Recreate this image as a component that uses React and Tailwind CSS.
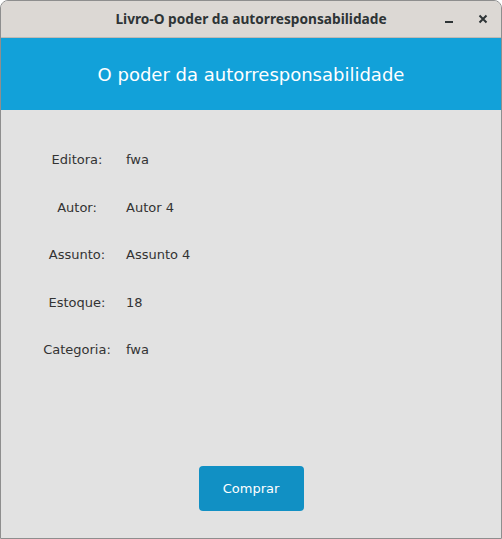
import React from 'react';

const FIELDS = [
    ['Editora:', 'fwa'],
    ['Autor:', 'Autor 4'],
    ['Assunto:', 'Assunto 4'],
    ['Estoque:', '18'],
    ['Categoria:', 'fwa'],
];

const App = () => {
    return (
        <div className="w-[502px] h-[539px] flex flex-col bg-[#e2e2e2] border border-[#8e8e8e] rounded-t-[8px] overflow-hidden font-['DejaVu_Sans',sans-serif]">
            {/* title bar */}
            <div className="h-[37px] shrink-0 flex items-center relative bg-[#dcd8d4] border-b border-[#bfbab5]">
                <div className="flex-1 text-center text-[13.7px] font-bold text-[#2e3436] font-['Noto_Sans',sans-serif]">Livro-O poder da autorresponsabilidade</div>
                <div className="absolute right-[13px] top-0 h-full flex items-center gap-[24px]">
                    <svg width="10" height="10" viewBox="0 0 10 10"><rect x="1" y="7" width="8" height="2" fill="#2e3436" /></svg>
                    <svg width="10" height="10" viewBox="0 0 10 10"><path d="M1.5 1.5 L8.5 8.5 M8.5 1.5 L1.5 8.5" stroke="#2e3436" strokeWidth="2" /></svg>
                </div>
            </div>

            {/* header */}
            <div className="h-[72px] shrink-0 bg-[#12a1d9] flex items-center justify-center text-white text-[18px] pt-[1px]">
                O poder da autorresponsabilidade
            </div>

            {/* fields */}
            <div className="flex-1 flex flex-col pt-[26px] text-[13px] text-[#333]">
                {FIELDS.map(([label, value]) => (
                    <div key={label} className="h-[47.5px] flex items-center">
                        <div className="w-[90px] ml-[31px] text-center">{label}</div>
                        <div className="ml-[4px]">{value}</div>
                    </div>
                ))}
            </div>

            <div className="flex justify-center pb-[27px]">
                <button className="w-[105px] h-[45px] rounded-[4px] bg-[#1190c4] text-white text-[13px]">Comprar</button>
            </div>
        </div>
    );
};

export default App;
